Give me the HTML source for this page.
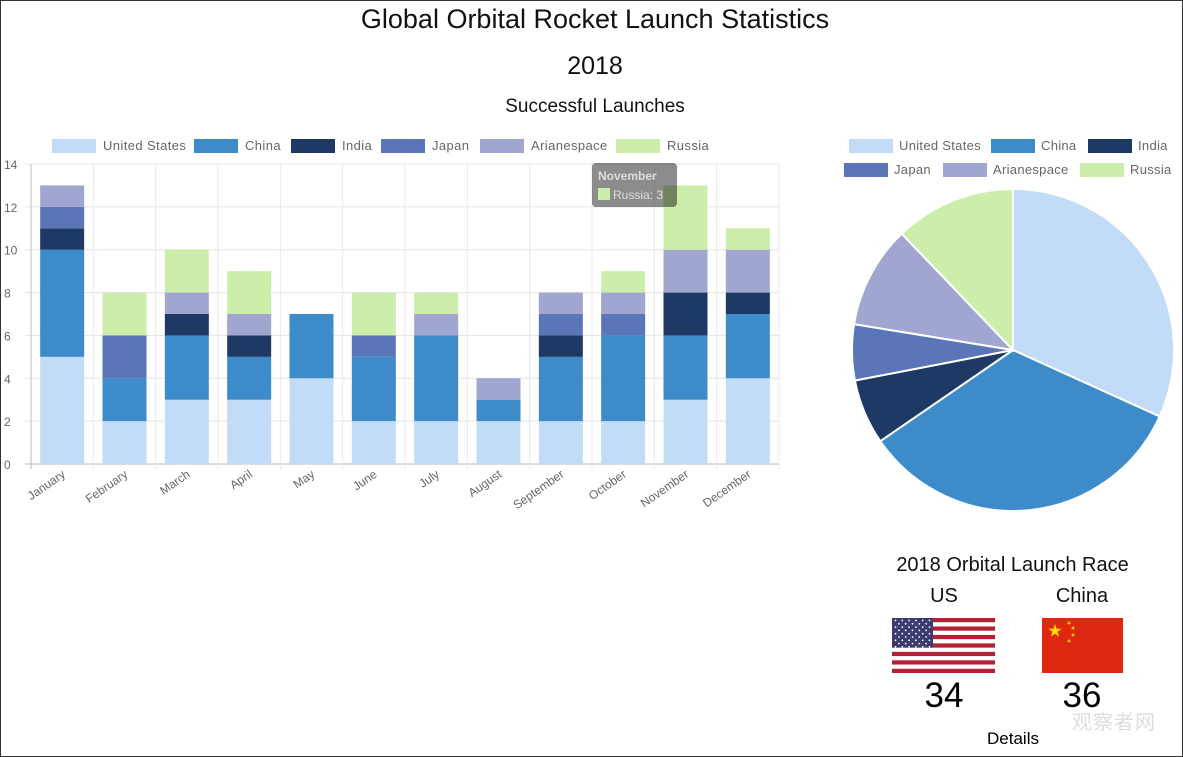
<!DOCTYPE html>
<html><head><meta charset="utf-8"><style>
body{margin:0;width:1183px;height:757px;overflow:hidden;background:#fff;font-family:"Liberation Sans",Arial,sans-serif;}
#frame{position:absolute;left:0;top:0;width:1181px;height:755px;border:1px solid #333;}
.t{position:absolute;text-align:center;color:#111;}
</style></head><body>
<div id="frame"></div>
<div class="t" style="left:0;width:1190px;top:4px;font-size:27px">Global Orbital Rocket Launch Statistics</div>
<div class="t" style="left:0;width:1190px;top:52px;font-size:25px">2018</div>
<div class="t" style="left:400px;width:390px;top:96px;font-size:19px">Successful Launches</div>
<svg id="s" width="1183" height="757" style="position:absolute;left:0;top:0" font-family="Liberation Sans,Arial,sans-serif"></svg>
<div class="t" style="left:880px;width:265px;top:554px;font-size:20px">2018 Orbital Launch Race</div>
<div class="t" style="left:904px;width:80px;top:585px;font-size:20px">US</div>
<div class="t" style="left:1042px;width:80px;top:585px;font-size:20px">China</div>
<div class="t" style="left:894px;width:100px;top:676px;font-size:35px;color:#000">34</div>
<div class="t" style="left:1032px;width:100px;top:676px;font-size:35px;color:#000">36</div>
<div class="t" style="left:963px;width:100px;top:729px;font-size:17px;color:#000">Details</div>
<div class="t" style="left:1072px;top:706px;font-size:20px;color:#ddd;letter-spacing:1px">观察者网</div>
<script>
var s=document.getElementById('s'),h='';
var C=['#c2dcf7','#3d8bc9','#1e3a64','#5b76b8','#a0a6d0','#cdeeaa'];
var N=['United States','China','India','Japan','Arianespace','Russia'];
var M=['January','February','March','April','May','June','July','August','September','October','November','December'];
var D=[[5,5,1,1,1,0],[2,2,0,2,0,2],[3,3,1,0,1,2],[3,2,1,0,1,2],[4,3,0,0,0,0],[2,3,0,1,0,2],[2,4,0,0,1,1],[2,1,0,0,1,0],[2,3,1,1,1,0],[2,4,0,1,1,1],[3,3,2,0,2,3],[4,3,1,0,2,1]];
var x0=31,x1=779,y0=464,u=300/14,cw=(x1-x0)/12;
for(var i=0;i<=7;i++){var y=y0-i*2*u;h+='<line x1="25" x2="779" y1="'+y+'" y2="'+y+'" stroke="'+(i?'#e4e4e4':'#bbb')+'"/>';h+='<text x="4" y="'+(y+5)+'" font-size="12" fill="#666">'+i*2+'</text>';}
for(var i=0;i<=12;i++){var x=x0+i*cw;h+='<line x1="'+x+'" x2="'+x+'" y1="164" y2="469" stroke="'+(i?'#e8e8e8':'#bbb')+'"/>';}
D.forEach(function(d,i){var cx=x0+cw*(i+.5),y=y0;d.forEach(function(v,j){if(!v)return;var hh=v*u;y-=hh;h+='<rect x="'+(cx-22)+'" y="'+y+'" width="44" height="'+hh+'" fill="'+C[j]+'"/>';});
h+='<text transform="translate('+(cx+4)+',476) rotate(-35)" text-anchor="end" font-size="12" fill="#666">'+M[i]+'</text>';});
var lx=[52,194,291,381,480,616];
N.forEach(function(n,j){h+='<rect x="'+lx[j]+'" y="139" width="44" height="14" fill="'+C[j]+'"/><text x="'+(lx[j]+51)+'" y="150" font-size="13" fill="#666" letter-spacing=".4">'+n+'</text>';});
h+='<rect x="592" y="163" width="85" height="44" rx="4" fill="rgba(0,0,0,0.45)"/><text x="598" y="180" font-size="12" font-weight="bold" fill="#ddd">November</text><rect x="598" y="188" width="12" height="12" fill="#cdeeaa"/><text x="613" y="199" font-size="12" fill="#ddd">Russia: 3</text>';
var pl=[[849,145],[991,145],[1088,145],[844,169],[943,169],[1080,169]];
N.forEach(function(n,j){h+='<rect x="'+pl[j][0]+'" y="'+(pl[j][1]-6)+'" width="44" height="14" fill="'+C[j]+'"/><text x="'+(pl[j][0]+50)+'" y="'+(pl[j][1]+5)+'" font-size="13" fill="#666" letter-spacing=".3">'+n+'</text>';});
var T=[34,36,7,6,11,13],tot=107,a=-Math.PI/2,cx=1013,cy=350,r=161;
T.forEach(function(v,j){var b=a+v/tot*2*Math.PI;var p1=[cx+r*Math.cos(a),cy+r*Math.sin(a)],p2=[cx+r*Math.cos(b),cy+r*Math.sin(b)];
h+='<path d="M'+cx+','+cy+'L'+p1+'A'+r+','+r+' 0 '+(b-a>Math.PI?1:0)+' 1 '+p2+'Z" fill="'+C[j]+'" stroke="#fff" stroke-width="2"/>';a=b;});
var fx=892,fy=618,fw=103,fh=55,sh=fh/13;
h+='<rect x="'+fx+'" y="'+fy+'" width="'+fw+'" height="'+fh+'" fill="#fff"/>';
for(var k=0;k<13;k+=2)h+='<rect x="'+fx+'" y="'+(fy+k*sh)+'" width="'+fw+'" height="'+sh+'" fill="#b22234"/>';
h+='<rect x="'+fx+'" y="'+fy+'" width="41" height="'+(sh*7)+'" fill="#3c3b6e"/>';
for(var yy=0;yy<9;yy++)for(var xx=0;xx<(yy%2?5:6);xx++)h+='<circle cx="'+(fx+3.5+xx*6.8+(yy%2?3.4:0))+'" cy="'+(fy+2.5+yy*3.3)+'" r="0.9" fill="#fff"/>';
h+='<rect x="1042" y="618" width="81" height="55" fill="#de2910"/>';
function star(x,y,R,rot){var p=[];for(var k=0;k<10;k++){var rr=k%2?R*.38:R,an=rot+k*Math.PI/5-Math.PI/2;p.push((x+rr*Math.cos(an)).toFixed(1)+','+(y+rr*Math.sin(an)).toFixed(1));}return '<polygon points="'+p.join(' ')+'" fill="#ffde00"/>';}
h+=star(1055,631,7,0)+star(1069,623,2.3,.5)+star(1073,628,2.3,.2)+star(1073,635,2.3,0)+star(1069,641,2.3,.4);
s.innerHTML=h;
</script>
</body></html>
